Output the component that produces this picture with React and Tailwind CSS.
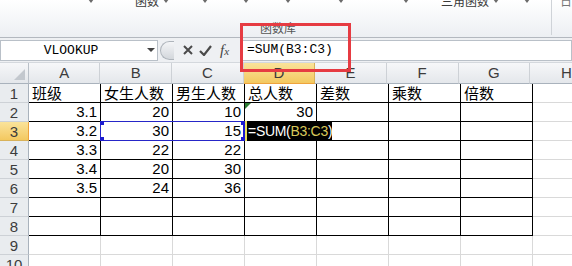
import React from "react";

const data = [
  ["班级", "女生人数", "男生人数", "总人数", "差数", "乘数", "倍数"],
  ["3.1", "20", "10", "30", "", "", ""],
  ["3.2", "30", "15", "", "", "", ""],
  ["3.3", "22", "22", "", "", "", ""],
  ["3.4", "20", "30", "", "", "", ""],
  ["3.5", "24", "36", "", "", "", ""],
  ["", "", "", "", "", "", ""],
  ["", "", "", "", "", "", ""],
  ["", "", "", "", "", "", ""],
  ["", "", "", "", "", "", ""],
];
const cols = ["A", "B", "C", "D", "E", "F", "G"];

function Tri() {
  return <span className="block w-0 h-0 border-x-[3px] border-x-transparent border-t-[4px] border-t-[#6b6b6b]" />;
}

function Ribbon() {
  return (
    <div className="h-[38px] flex border-b border-[#b3b8bf] bg-gradient-to-b from-white to-[#eceff3] overflow-hidden text-[12px] text-[#3a3a3a] font-[family-name:'Noto_Sans_CJK_SC',sans-serif]">
      <div className="w-[556px] flex flex-col">
        <div className="h-[14px] -mt-[6px] flex items-center leading-[14px]">
          <span className="ml-[88px]"><Tri /></span>
          <span className="ml-[41px]">函数</span>
          <span className="ml-[4px]"><Tri /></span>
          <span className="ml-[33px]"><Tri /></span>
          <span className="ml-[35px]"><Tri /></span>
          <span className="ml-[36px]"><Tri /></span>
          <span className="ml-[47px]"><Tri /></span>
          <span className="ml-[59px]"><Tri /></span>
          <span className="ml-[32px]">三角函数</span>
          <span className="ml-[4px]"><Tri /></span>
          <span className="ml-[25px]"><Tri /></span>
        </div>
        <div className="mt-[13px] ml-[260px] leading-[14px] text-[#555]">函数库</div>
      </div>
      <div className="w-[1px] h-[35px] bg-[#cfd3d8]" />
      <div className="-mt-[6px] ml-[8px] leading-[14px] text-[#777]">日</div>
    </div>
  );
}

function FormulaBar() {
  return (
    <div className="h-[25px] flex items-center bg-[#eef0f3] border-b border-[#d4d8dd]">
      <div className="w-[158px] h-[21px] bg-white border border-[#b9c0c8] flex items-center">
        <div className="w-[140px] text-center font-[family-name:'Liberation_Mono',monospace] text-[13px] text-black leading-[19px]">VLOOKUP</div>
        <span className="ml-[6px]"><span className="block w-0 h-0 border-x-[4px] border-x-transparent border-t-[4px] border-t-[#444]" /></span>
      </div>
      <div className="ml-[2px] w-[14px] h-[19px] rounded-l-full border border-r-0 border-[#aeb4bb] bg-gradient-to-b from-[#f4f5f7] to-[#d3d7dc]" />
      <svg className="ml-[9px]" width="10" height="10" viewBox="0 0 10 10">
        <path d="M1 1 L9 9 M9 1 L1 9" stroke="#4a4a4a" strokeWidth="2" />
      </svg>
      <svg className="ml-[6px]" width="13" height="11" viewBox="0 0 13 11">
        <path d="M1 6 L5 10 L12 1" stroke="#4a4a4a" strokeWidth="2.2" fill="none" />
      </svg>
      <div className="ml-[8px] w-[20px] font-[family-name:'Liberation_Serif',serif] italic text-[#444] leading-none">
        <span className="text-[15px]">f</span>
        <span className="text-[11px]">x</span>
      </div>
      <div className="flex-1 h-[21px] bg-white border border-[#b9c0c8] pl-[6px] flex items-center font-[family-name:'Liberation_Mono',monospace] text-[13px] text-black">
        =SUM(B3:C3)
      </div>
    </div>
  );
}

function HeaderRow() {
  return (
    <div className="flex h-[21px]">
      <div className="w-[29px] h-[21px] flex items-end justify-end border-r border-b border-r-[#b9c0c8] border-b-[#a9b2bc] bg-gradient-to-b from-[#f6f7f9] to-[#e4e7eb]">
        <span className="block mr-[3px] mb-[3px] w-0 h-0 border-l-[11px] border-l-transparent border-b-[11px] border-b-[#c3c8ce]" />
      </div>
      {cols.map((c) =>
        c === "D" ? (
          <div key={c} className="w-[72px] h-[21px] flex items-center justify-center border-r border-b border-r-[#d8b25a] border-b-[#eea33c] bg-gradient-to-b from-[#fae39a] to-[#f3c85f] text-[15px] text-[#3c3c3c]">
            {c}
          </div>
        ) : (
          <div key={c} className="w-[72px] h-[21px] flex items-center justify-center border-r border-b border-r-[#cdd1d6] border-b-[#a9b2bc] bg-gradient-to-b from-[#f6f7f9] to-[#e4e7eb] text-[15px] text-[#3c3c3c]">
            {c}
          </div>
        )
      )}
      <div className="flex-1 h-[21px] flex items-center pl-[31px] border-b border-b-[#a9b2bc] bg-gradient-to-b from-[#f6f7f9] to-[#e4e7eb] text-[15px] text-[#3c3c3c]">
        H
      </div>
    </div>
  );
}

function DataRow({ r }) {
  const row = data[r];
  const rowNum = r + 1;
  const inRows = rowNum <= 8;
  return (
    <div className="flex h-[19px]">
      {rowNum === 3 ? (
        <div className="w-[29px] h-[19px] flex items-center justify-center border-r border-b border-r-[#eea33c] border-b-[#d8b25a] bg-gradient-to-b from-[#fae39a] to-[#f3c85f] text-[15px] text-[#3c3c3c] leading-none">
          {rowNum}
        </div>
      ) : (
        <div className="w-[29px] h-[19px] flex items-center justify-center border-r border-b border-r-[#a9b2bc] border-b-[#cdd1d6] bg-[#e9ecef] text-[15px] text-[#3c3c3c] leading-none">
          {rowNum}
        </div>
      )}
      {row.map((v, i) => {
        const isText = rowNum === 1;
        return (
          <div
            key={i}
            className={`relative w-[72px] h-[19px] border-r border-b ${inRows ? "border-black" : "border-[#d9d9d9]"} ${isText ? "text-left pl-[3px] font-[family-name:'Noto_Sans_CJK_SC',sans-serif]" : "text-right pr-[3px]"} text-[15px] leading-[18px] text-black overflow-visible whitespace-nowrap`}
          >
            {rowNum === 2 && i === 3 && (
              <span className="absolute left-0 top-0 w-0 h-0 border-t-[6px] border-t-[#2d7d35] border-r-[6px] border-r-transparent" />
            )}
            {v}
          </div>
        );
      })}
      <div className="flex-1 h-[19px] border-b border-[#d9d9d9]" />
    </div>
  );
}

export default function App() {
  return (
    <div className="relative w-[572px] h-[266px] overflow-hidden bg-white font-[family-name:'Liberation_Sans','Noto_Sans_CJK_SC',sans-serif]">
      <Ribbon />
      <FormulaBar />
      <div className="relative">
        <HeaderRow />
        {data.map((_, r) => (
          <DataRow key={r} r={r} />
        ))}
        <div className="absolute left-[100px] top-[58px] w-[145px] h-[20px] border border-[#2626c8]">
          <span className="absolute -left-[1px] -top-[1px] w-[4px] h-[4px] bg-[#1c1cd0]" />
          <span className="absolute -left-[1px] -bottom-[1px] w-[4px] h-[4px] bg-[#1c1cd0]" />
          <span className="absolute -right-[1px] -top-[1px] w-[4px] h-[4px] bg-[#1c1cd0]" />
          <span className="absolute -right-[1px] -bottom-[1px] w-[4px] h-[4px] bg-[#1c1cd0]" />
          <span className="absolute -right-[1px] -top-[1px] w-[2px] h-[20px] bg-[#1c1cd0]" />
        </div>
        <div className="absolute left-[245px] top-[58px] w-[87px] h-[20px] bg-black border-l-2 border-[#e8e05a] flex items-center pl-[1px] text-[14px] tracking-[-0.3px] whitespace-nowrap">
          <span className="text-white">=SUM(</span>
          <span className="text-[#d8c85a]">B3:C3</span>
          <span className="text-white">)</span>
        </div>
      </div>
      <div className="absolute left-[240px] top-[23px] w-[111px] h-[49px] border-[3px] border-[#e63b42]" />
    </div>
  );
}
